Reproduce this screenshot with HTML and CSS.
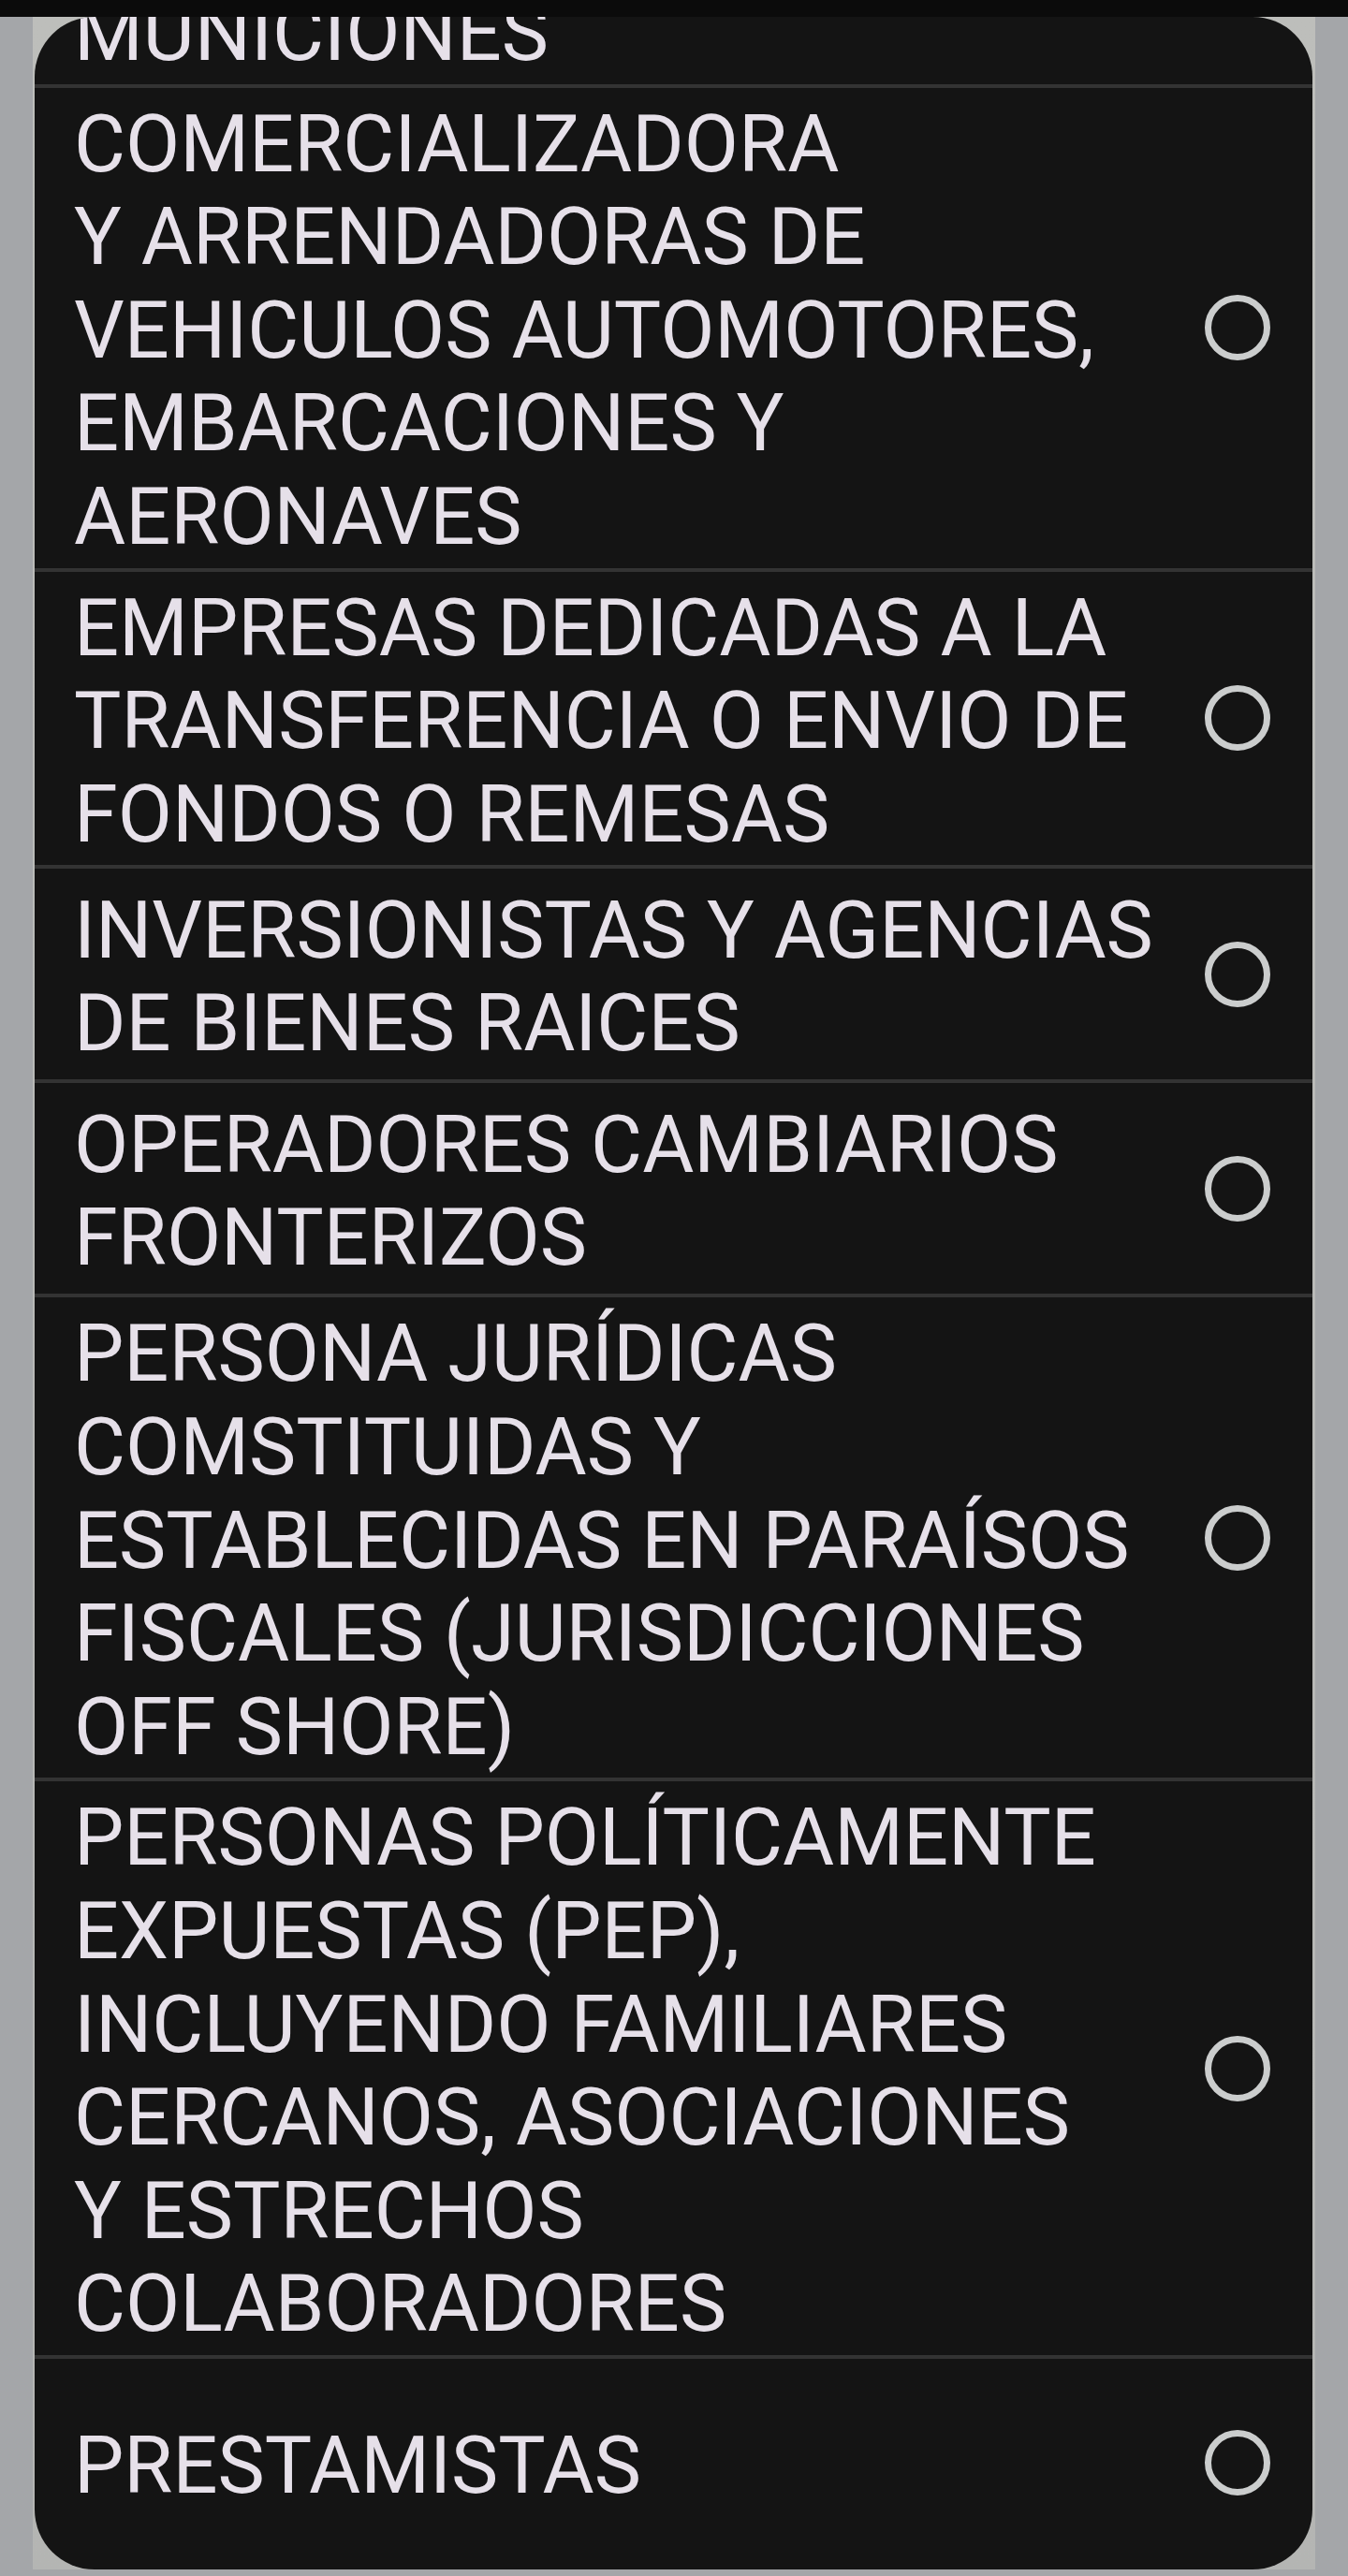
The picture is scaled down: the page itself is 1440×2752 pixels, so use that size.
FILE: index.html
```html
<!DOCTYPE html>
<html lang="es">
<head>
	<meta charset="UTF-8">
	<title>Actividad económica</title>
	<link rel="stylesheet" href="styles.css">
</head>
<body>
<div class="statusbar"></div>
<div class="sheet">
	<div class="card">
		<ul class="options">
			<li class="option first">
				<span class="label">MUNICIONES</span>
			</li>
			<li class="option">
				<span class="label">COMERCIALIZADORA<br>Y ARRENDADORAS DE<br>VEHICULOS AUTOMOTORES,<br>EMBARCACIONES Y<br>AERONAVES</span>
				<span class="radio"></span>
			</li>
			<li class="option">
				<span class="label">EMPRESAS DEDICADAS A LA<br>TRANSFERENCIA O ENVIO DE<br>FONDOS O REMESAS</span>
				<span class="radio"></span>
			</li>
			<li class="option">
				<span class="label">INVERSIONISTAS Y AGENCIAS<br>DE BIENES RAICES</span>
				<span class="radio"></span>
			</li>
			<li class="option">
				<span class="label">OPERADORES CAMBIARIOS<br>FRONTERIZOS</span>
				<span class="radio"></span>
			</li>
			<li class="option">
				<span class="label">PERSONA JURÍDICAS<br>COMSTITUIDAS Y<br>ESTABLECIDAS EN PARAÍSOS<br>FISCALES (JURISDICCIONES<br>OFF SHORE)</span>
				<span class="radio"></span>
			</li>
			<li class="option">
				<span class="label">PERSONAS POLÍTICAMENTE<br>EXPUESTAS (PEP),<br>INCLUYENDO FAMILIARES<br>CERCANOS, ASOCIACIONES<br>Y ESTRECHOS<br>COLABORADORES</span>
				<span class="radio"></span>
			</li>
			<li class="option last">
				<span class="label">PRESTAMISTAS</span>
				<span class="radio"></span>
			</li>
		</ul>
	</div>
</div>
</body>
</html>
```

FILE: styles.css
```css
body{
	margin: 0;
	background: #a4a6a9;
	font-family: Roboto, "Noto Sans", sans-serif;
}

.statusbar{
	height: 18px;
	background: #0b0b0b;
}

/* lighter panel behind the dialog, only seen at the round corners */
.sheet{
	margin: 0 35px;
	padding: 0 3px 0 2px;
	background: linear-gradient(to bottom, #bdbebb, #b4b5b3);
}

.card{
	height: 2727px;
	background: #141414;
	border-radius: 64px;
	overflow: hidden;
}

.options{
	list-style: none;
	margin: 0;
	padding: 0;
}

.option{
	display: flex;
	align-items: center;
	min-height: 225px;
	padding: 0 45px 0 42px;
	border-bottom: 4px solid #333333;
}

.option.first{
	min-height: 0;
	margin-top: -43px;
}

.option.last{
	border-bottom: none;
	min-height: 223px;
}

.label{
	flex: 1;
	padding: 11px 0 4px;
	font-size: 84.6px;
	line-height: 99.6px;
	color: #e6e0e9;
	white-space: nowrap;
}

.radio{
	flex: none;
	width: 70px;
	height: 70px;
	box-sizing: border-box;
	border: 7px solid #cbcdcd;
	border-radius: 50%;
}
```
